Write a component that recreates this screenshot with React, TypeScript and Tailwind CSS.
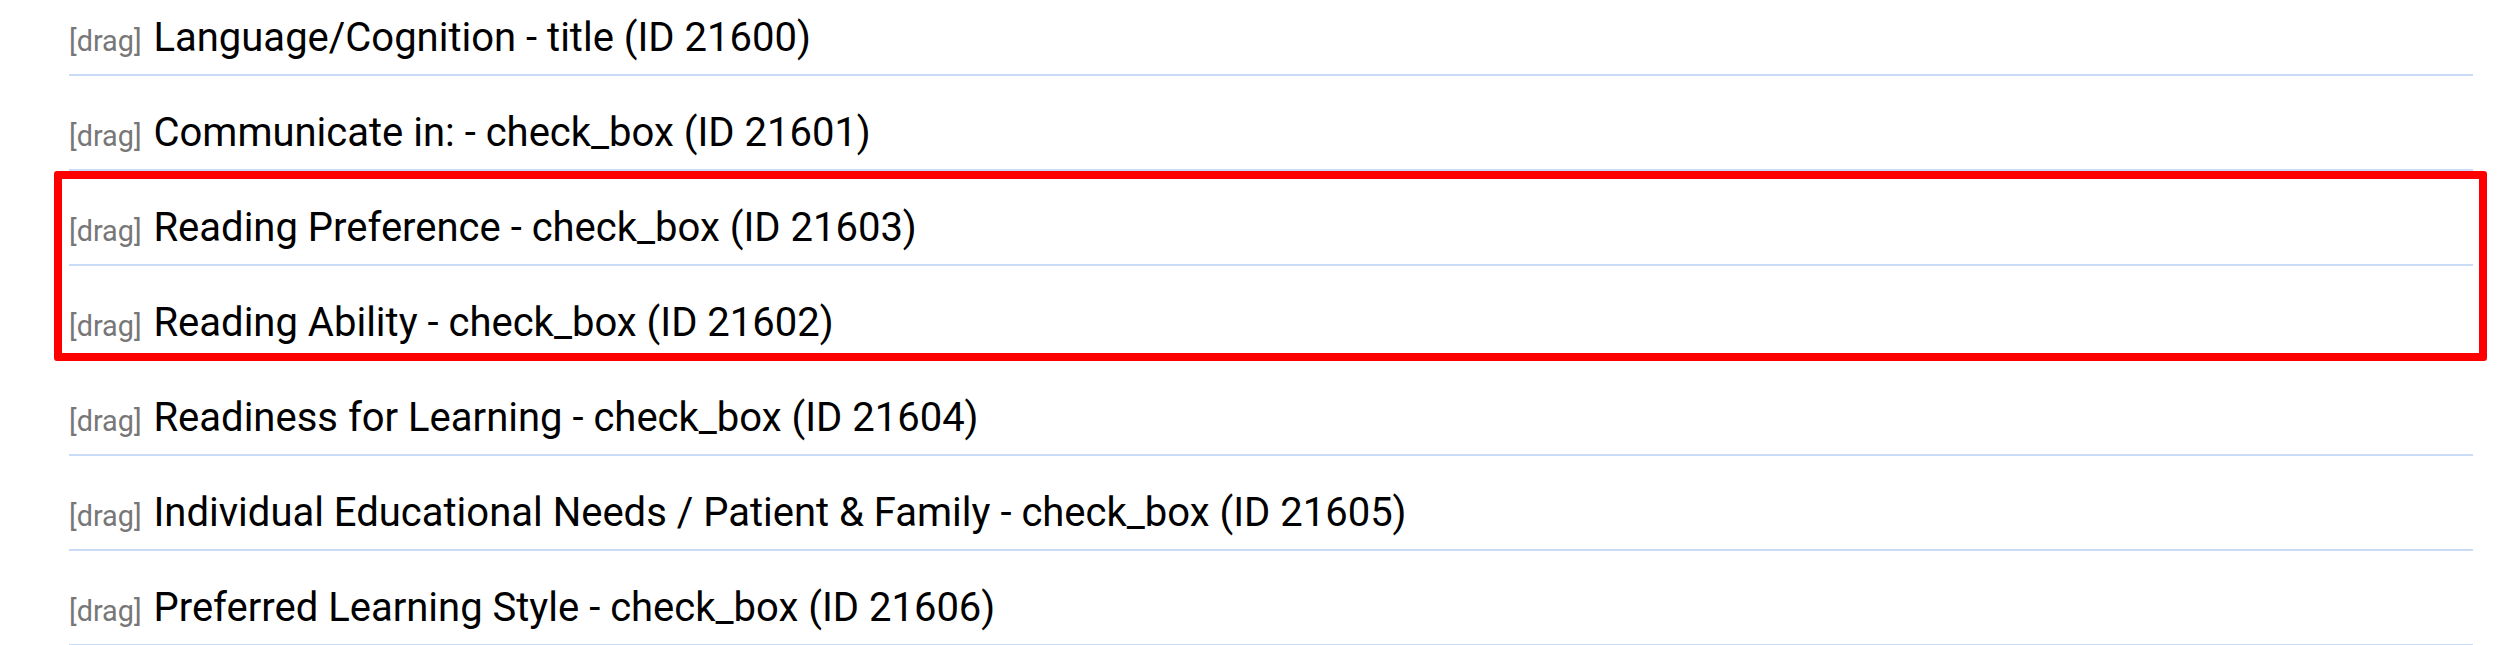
import React from "react";

const rows = [
  "Language/Cognition - title (ID 21600)",
  "Communicate in: - check_box (ID 21601)",
  "Reading Preference - check_box (ID 21603)",
  "Reading Ability - check_box (ID 21602)",
  "Readiness for Learning - check_box (ID 21604)",
  "Individual Educational Needs / Patient & Family - check_box (ID 21605)",
  "Preferred Learning Style - check_box (ID 21606)",
];

function Row({ label }: { label: string }) {
  return (
    <div className="h-[95px] border-b-2 border-[#c9dcf7] pt-[33px] leading-[48px] text-[40px] text-black whitespace-nowrap">
      <span className="text-[28.8px] leading-none text-[#777777]">[drag]</span>{" "}
      <span className="ml-[2px]">{label}</span>
    </div>
  );
}

export default function App() {
  return (
    <div
      className="w-[2500px] h-[645px] overflow-hidden bg-white"
      style={{ fontFamily: "Roboto, 'Noto Sans', sans-serif" }}
    >
      <div className="-mt-[19px] pl-[69px] pr-[27px]">
        <Row label={rows[0]} />
        <Row label={rows[1]} />
        <div className="relative">
          <Row label={rows[2]} />
          <Row label={rows[3]} />
          <div className="pointer-events-none absolute -left-[15px] -right-[14px] top-0 bottom-0 rounded-[3px] border-[8px] border-[#ff0000]" />
        </div>
        <Row label={rows[4]} />
        <Row label={rows[5]} />
        <Row label={rows[6]} />
      </div>
    </div>
  );
}
